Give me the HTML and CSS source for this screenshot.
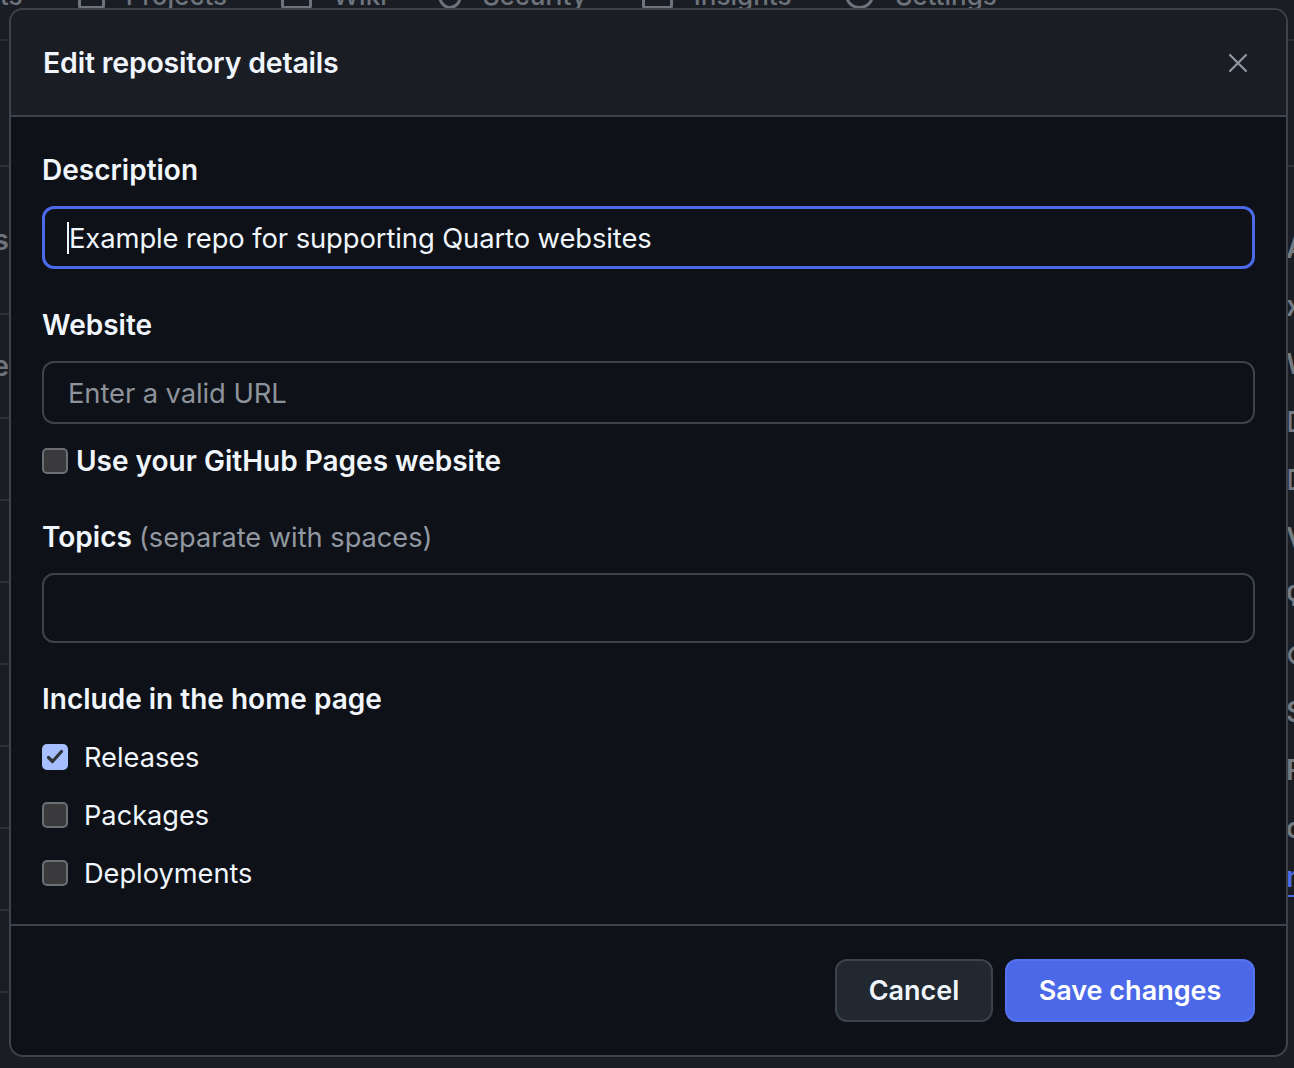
FILE: index.html
```html
<!DOCTYPE html>
<html lang="en">
<head>
<meta charset="utf-8">
<title>Edit repository details</title>
<link rel="stylesheet" href="styles.css">
</head>
<body>
<div class="page">
  <nav class="tabs">
    <span class="tab t0">ts</span>
    <span class="tab t1"><span class="tab-ico w27"></span>Projects</span>
    <span class="tab t2"><span class="tab-ico w31"></span>Wiki</span>
    <span class="tab t3"><span class="tab-ico w24 round"></span>Security</span>
    <span class="tab t4"><span class="tab-ico w31"></span>Insights</span>
    <span class="tab t5"><span class="tab-ico w29 round"></span>Settings</span>
  </nav>
  <div class="main">
    <div class="side">
      <div class="row r0"></div>
      <div class="row r1">s</div>
      <div class="row r2">re</div>
      <div class="row"></div>
      <div class="row"></div>
      <div class="row"></div>
      <div class="row"></div>
      <div class="row"></div>
      <div class="row"></div>
      <div class="row"></div>
    </div>
    <div class="aside">
      <div class="aside-line"></div>
      <p class="frag f1">A</p>
      <p class="frag f2">x</p>
      <p class="frag f3">W</p>
      <p class="frag f4">□</p>
      <p class="frag f5">□</p>
      <p class="frag f6">V</p>
      <p class="frag f7">ʕ</p>
      <p class="frag f8">⊙</p>
      <p class="frag f9">S</p>
      <p class="frag f10">R</p>
      <p class="frag f11">o</p>
      <p class="frag link">n</p>
    </div>
  </div>
</div>

<div class="dialog" role="dialog" aria-labelledby="dlg-title">
  <header class="dialog-header">
    <h1 id="dlg-title" class="dialog-title">Edit repository details</h1>
    <button class="close-btn" aria-label="Close">
      <svg width="20" height="20" viewBox="0 0 20 20"><path d="M2 2 L18 18 M18 2 L2 18" stroke="#9198a1" stroke-width="2.2" stroke-linecap="round" fill="none"/></svg>
    </button>
  </header>
  <div class="dialog-body">
    <label class="label">Description</label>
    <div class="input focused"><span class="caret"></span>Example repo for supporting Quarto websites</div>

    <label class="label gap">Website</label>
    <div class="input"><span class="placeholder">Enter a valid URL</span></div>

    <div class="check-row tight">
      <span class="checkbox"></span>
      <span class="check-label bold">Use your GitHub Pages website</span>
    </div>

    <label class="label gap">Topics <span class="hint">(separate with spaces)</span></label>
    <div class="input tall"></div>

    <label class="label gap wide">Include in the home page</label>
    <div class="check-row spaced">
      <span class="checkbox checked">
        <svg width="26" height="26" viewBox="0 0 26 26"><path d="M6.5 13.5 L10.5 17.5 L19.5 7.5" stroke="#2f3236" stroke-width="3.2" fill="none" stroke-linecap="round" stroke-linejoin="round"/></svg>
      </span>
      <span class="check-label">Releases</span>
    </div>
    <div class="check-row spaced">
      <span class="checkbox"></span>
      <span class="check-label">Packages</span>
    </div>
    <div class="check-row spaced">
      <span class="checkbox"></span>
      <span class="check-label">Deployments</span>
    </div>
  </div>
  <footer class="dialog-footer">
    <button class="btn btn-default">Cancel</button>
    <button class="btn btn-primary">Save changes</button>
  </footer>
</div>
</body>
</html>
```

FILE: styles.css
```css
* { box-sizing: border-box; }

html, body {
  margin: 0;
  padding: 0;
  height: 100%;
}

body {
  background: #1a1d24;
  font-family: Inter, "Noto Sans", "Liberation Sans", sans-serif;
  color: #f0f6fc;
  overflow: hidden;
  position: relative;
}

/* ---------- dimmed page behind the dialog ---------- */
.page {
  color: #6e747c;
}

.tabs {
  display: flex;
  align-items: flex-end;
  height: 41px;
  border-bottom: 2px solid #2a2e35;
  overflow: hidden;
  font-size: 26px;
  font-weight: 500;
  line-height: 1;
}

.tab {
  display: flex;
  align-items: flex-end;
  gap: 21px;
  transform: translateY(-30px);
  white-space: nowrap;
}

.t0 { margin-right: 55px; }
.t1 { margin-right: 54px; }
.t2 { margin-right: 51px; }
.t3 { margin-right: 55px; }
.t4 { margin-right: 54px; }

.tab-ico {
  display: inline-block;
  height: 28px;
  border: 3px solid #6e747c;
  border-radius: 3px;
}

.w24 { width: 24px; }
.w27 { width: 27px; }
.w29 { width: 29px; }
.w31 { width: 31px; }

.tab-ico.round { border-radius: 50%; }

.main {
  display: flex;
  justify-content: space-between;
}

.side {
  width: 9px;
  overflow: hidden;
  display: flex;
  flex-direction: column;
}

.row {
  height: 82px;
  border-bottom: 2px solid #2b2f36;
  font-size: 28px;
  font-weight: 600;
  color: #6e747c;
  display: flex;
  align-items: center;
  justify-content: flex-end;
  white-space: nowrap;
}

.r0 { height: 126px; }
.r1 { height: 148px; }
.r2 { height: 104px; }

.aside {
  width: 8px;
  overflow: hidden;
  font-size: 28px;
  color: #747a82;
}

.aside-line {
  height: 126px;
  border-bottom: 2px solid #2b2f36;
}

.frag {
  margin: 0;
  height: 58px;
  line-height: 58px;
  white-space: nowrap;
  font-weight: 600;
}

.frag.f1 { margin-top: 52px; }
.frag.link {
  color: #4a6ae9;
  border-bottom: 2px solid #4a6ae9;
  height: 40px;
  line-height: 40px;
}

/* ---------- dialog ---------- */
.dialog {
  position: absolute;
  left: 9px;
  top: 8px;
  width: 1279px;
  height: 1049px;
  background: #0e1117;
  border: 2px solid #3d434b;
  border-radius: 14px;
  display: flex;
  flex-direction: column;
  overflow: hidden;
}

.dialog-header {
  height: 107px;
  flex: none;
  background: #1a1d24;
  border-bottom: 2px solid #3d434b;
  display: flex;
  align-items: center;
  justify-content: space-between;
  padding: 0 30px 0 32px;
}

.dialog-title {
  margin: 0;
  font-size: 28.5px;
  font-weight: 600;
  letter-spacing: -0.2px;
  color: #f0f6fc;
}

.close-btn {
  background: none;
  border: 0;
  padding: 0;
  width: 36px;
  height: 36px;
  display: flex;
  align-items: center;
  justify-content: center;
  cursor: pointer;
}

.dialog-body {
  flex: 1;
  display: flex;
  flex-direction: column;
  padding: 33px 31px 0 31px;
}

.label {
  display: block;
  height: 40px;
  line-height: 40px;
  font-size: 28px;
  font-weight: 600;
  color: #f0f6fc;
  margin-bottom: 16px;
}

.label.gap { margin-top: 36px; }
.label.wide { margin-bottom: 18px; }

.hint {
  font-weight: 400;
  font-size: 27.2px;
  color: #9198a1;
}

.input {
  height: 63px;
  border: 2px solid #3d434b;
  border-radius: 12px;
  background: #0e1117;
  display: flex;
  align-items: center;
  padding-left: 24px;
  font-size: 27.4px;
  color: #f0f6fc;
  letter-spacing: -0.1px;
}

.input.focused {
  border: 3px solid #4b69e9;
  padding-left: 22px;
}

.input.tall { height: 70px; }

.caret {
  display: inline-block;
  width: 2px;
  height: 32px;
  background: #f0f6fc;
}

.placeholder { color: #8d939b; }

.check-row {
  display: flex;
  align-items: center;
  height: 40px;
}

.check-row.tight { margin-top: 17px; gap: 8px; }
.check-row.spaced { margin-bottom: 18px; gap: 16px; }

.checkbox {
  width: 26px;
  height: 26px;
  flex: none;
  border: 2px solid #6b6e73;
  background: #3a3a3c;
  border-radius: 5px;
  display: flex;
  align-items: center;
  justify-content: center;
}

.checkbox.checked {
  border: none;
  background: #a6bfff;
}

.check-label {
  font-size: 27.2px;
  color: #f0f6fc;
}

.check-label.bold {
  font-size: 28px;
  font-weight: 600;
}

.dialog-footer {
  flex: none;
  border-top: 2px solid #3d434b;
  height: 131px;
  display: flex;
  justify-content: flex-end;
  align-items: flex-start;
  gap: 12px;
  padding: 33px 31px 0 0;
}

.btn {
  height: 63px;
  border-radius: 12px;
  font-family: inherit;
  font-size: 27px;
  font-weight: 600;
  color: #f0f6fc;
  padding: 0;
  cursor: pointer;
}

.btn-default {
  width: 158px;
  background: #212830;
  border: 2px solid #3d434b;
}

.btn-primary {
  width: 250px;
  background: #4a68e8;
  border: 2px solid #5572ec;
  color: #ffffff;
}
```
